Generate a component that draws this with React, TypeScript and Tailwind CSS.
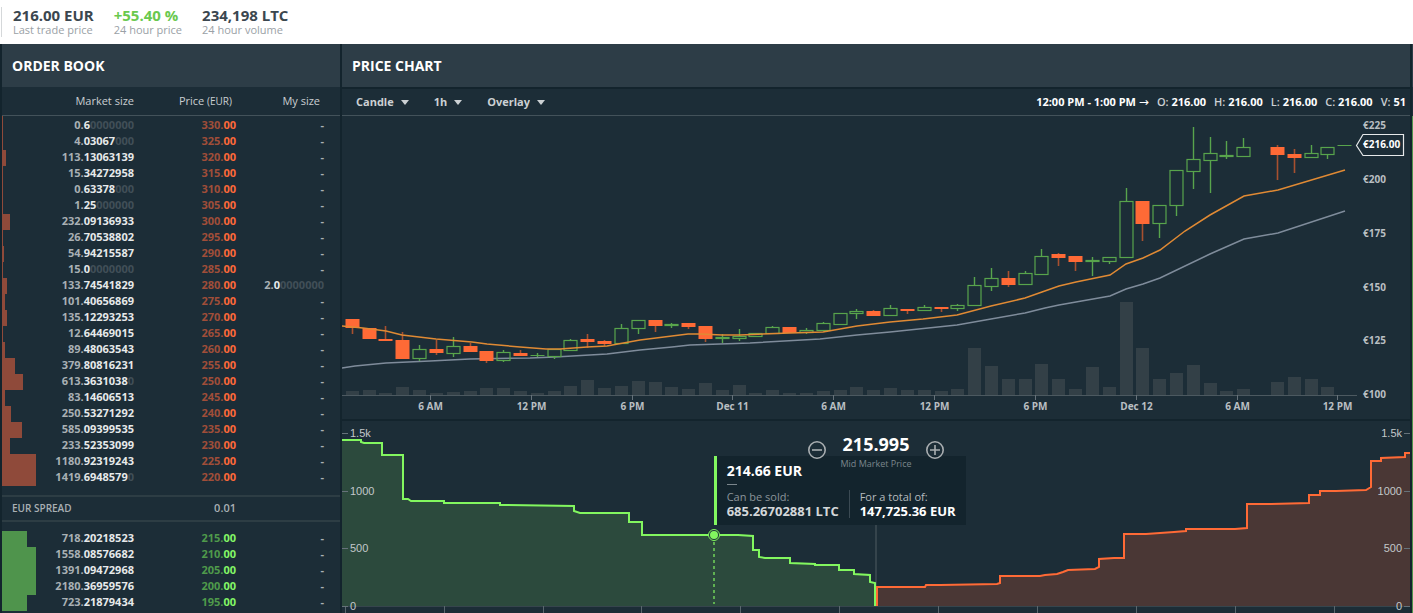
import { useState } from "react";

type Level = { size: string; price: number; mine?: string; bar: number };

type Candle = {
    up: boolean;
    top: number;
    bottom: number;
    high: number;
    low: number;
};

const asks: Level[] = [
    { size: "0.60000000", price: 330, bar: 1 },
    { size: "4.03067000", price: 325, bar: 1 },
    { size: "113.13063139", price: 320, bar: 4 },
    { size: "15.34272958", price: 315, bar: 1 },
    { size: "0.63378000", price: 310, bar: 1 },
    { size: "1.25000000", price: 305, bar: 1 },
    { size: "232.09136933", price: 300, bar: 8 },
    { size: "26.70538802", price: 295, bar: 1 },
    { size: "54.94215587", price: 290, bar: 2 },
    { size: "15.00000000", price: 285, bar: 1 },
    { size: "133.74541829", price: 280, mine: "2.00000000", bar: 5 },
    { size: "101.40656869", price: 275, bar: 3 },
    { size: "135.12293253", price: 270, bar: 5 },
    { size: "12.64469015", price: 265, bar: 1 },
    { size: "89.48063543", price: 260, bar: 3 },
    { size: "379.80816231", price: 255, bar: 13 },
    { size: "613.36310380", price: 250, bar: 21 },
    { size: "83.14606513", price: 245, bar: 3 },
    { size: "250.53271292", price: 240, bar: 9 },
    { size: "585.09399535", price: 235, bar: 20 },
    { size: "233.52353099", price: 230, bar: 8 },
    { size: "1180.92319243", price: 225, bar: 34 },
    { size: "1419.69485790", price: 220, bar: 34 },
];

const bids: Level[] = [
    { size: "718.20218523", price: 215, bar: 25 },
    { size: "1558.08576682", price: 210, bar: 34 },
    { size: "1391.09472968", price: 205, bar: 34 },
    { size: "2180.36959576", price: 200, bar: 34 },
    { size: "723.21879434", price: 195, bar: 25 },
];

const c = (
    up: boolean,
    top: number,
    bottom: number,
    high = top,
    low = bottom
): Candle => ({ up, top, bottom, high, low });

// null is an hour without trades
const candles: (Candle | null)[] = [
    c(false, 319, 328, 319, 334),
    c(false, 328, 339),
    c(false, 339, 341, 326),
    c(false, 340, 359, 332),
    c(true, 349, 359, 345, 361),
    c(false, 349, 353, 340, 355),
    c(true, 346, 354, 337, 357),
    c(false, 346, 352, 343),
    c(false, 351, 361, 351, 363),
    c(true, 352, 361, 350, 362),
    c(false, 353, 356, 350),
    c(true, 355, 356, 353, 357),
    c(true, 349, 357, 349, 359),
    c(true, 340, 351, 339),
    c(false, 339, 342, 334, 348),
    c(false, 341, 344, 340, 346),
    c(true, 328, 344, 324),
    c(true, 320, 329, 320, 334),
    c(false, 320, 326, 320, 332),
    c(true, 324, 326, 323, 328),
    c(false, 323, 327, 323, 329),
    c(false, 326, 339, 326, 342),
    c(true, 337, 339, 334, 343),
    c(true, 336, 339, 329, 341),
    c(true, 333, 337),
    c(true, 327, 334, 326),
    c(false, 327, 333),
    c(true, 330, 333, 328, 334),
    c(true, 323, 331, 322),
    c(true, 313, 325),
    c(true, 311, 314, 309, 319),
    c(false, 311, 316, 310),
    c(true, 308, 316, 305),
    c(false, 309, 311, 309, 314),
    c(true, 307, 311, 305),
    c(false, 307, 309, 307, 312),
    c(true, 305, 309, 304, 311),
    c(true, 285, 306, 277),
    c(true, 278, 287, 268, 291),
    c(false, 278, 285, 271, 287),
    c(true, 273, 285, 271),
    c(true, 256, 275, 249),
    c(false, 254, 258, 253, 266),
    c(false, 256, 262, 256, 271),
    c(true, 260, 262, 257, 276),
    c(true, 257, 262, 257, 264),
    c(true, 201, 258, 188),
    c(false, 201, 224, 201, 241),
    c(true, 205, 224, 205, 238),
    c(true, 170, 206, 170, 216),
    c(true, 159, 172, 127, 189),
    c(true, 153, 161, 137, 193),
    c(true, 155, 157, 141, 159),
    c(true, 147, 157, 138),
    null,
    c(false, 147, 155, 145, 180),
    c(false, 154, 158, 149, 173),
    c(true, 153, 158, 145),
    c(true, 147, 155, 147, 159),
    c(true, 145, 146),
];

const volumes = [
    4, 5, 2, 8, 5, 2, 3, 4, 7, 7, 4, 2, 4, 9, 15, 7, 9, 14, 13, 8, 6, 12, 5, 10,
    2, 5, 2, 2, 4, 5, 8, 5, 7, 5, 5, 4, 6, 47, 29, 16, 16, 31, 16, 6, 28, 8, 93,
    47, 16, 22, 30, 12, 4, 6, 0, 13, 18, 16, 8, 0,
];

const fastAverage =
    "342,326 363,328 386,331 402,335 436,339 472,342 487,344 520,347 546,349 560,349 587,347 607,346 640,340 672,336 688,334 700,334 722,335 740,335 790,333 823,332 857,326 890,322 923,319 957,315 991,306 1025,298 1042,292 1059,286 1076,282 1110,275 1126,264 1143,258 1160,250 1185,231 1210,215 1244,196 1278,190 1345,170";
const slowAverage =
    "342,368 355,366 386,363 430,361 470,359 530,358 555,357 607,354 640,350 672,347 690,345 720,344 750,343 820,339 857,335 890,332 957,325 991,319 1025,313 1045,308 1059,305 1076,302 1110,296 1126,289 1143,284 1160,278 1210,254 1244,239 1278,233 1345,211";

const bidDepth =
    "342,440 361,440 361,442 364,443 382,443 382,455 403,455 403,499 408,499 411,501 444,501 444,503 500,503 500,505 505,505 574,506 574,511 580,513 629,513 629,522 642,522 642,535 738,535 753,536 753,550 759,550 759,557 765,558 790,558 790,563 815,564 815,565 839,565 839,570 854,570 854,574 870,575 870,582 875,583 875,606";
const askDepth =
    "877,606 877,587 925,587 926,585 940,585 997,584 1000,583 1000,576 1040,576 1045,575 1057,574 1063,572 1068,570 1095,569 1099,567 1099,559 1114,558 1124,558 1124,534 1146,534 1174,532 1186,531 1186,529 1235,529 1247,528 1247,504 1271,504 1309,503 1309,495 1320,495 1320,491 1336,491 1366,490 1371,487 1371,461 1381,461 1381,458 1405,457 1405,453 1411,453";

const timeTicks = [
    { x: 430, label: "6 AM" },
    { x: 531, label: "12 PM" },
    { x: 632, label: "6 PM" },
    { x: 732, label: "Dec 11" },
    { x: 833, label: "6 AM" },
    { x: 934, label: "12 PM" },
    { x: 1035, label: "6 PM" },
    { x: 1136, label: "Dec 12" },
    { x: 1237, label: "6 AM" },
    { x: 1337, label: "12 PM" },
];

const priceTicks = [
    { y: 125, label: "€225" },
    { y: 179, label: "€200" },
    { y: 233, label: "€175" },
    { y: 287, label: "€150" },
    { y: 340, label: "€125" },
    { y: 394, label: "€100" },
];

const depthTicks = [
    { y: 433, label: "1.5k" },
    { y: 491, label: "1000" },
    { y: 548, label: "500" },
    { y: 606, label: "0" },
];

const depthPriceTicks = [
    345, 444, 543, 641, 740, 839, 938, 1037, 1136, 1235, 1334,
];

// Whole part is dimmed, trailing zeros are almost hidden
function Size({ value }: { value: string }) {
    const [whole, decimals] = value.split(".");
    const digits = decimals.replace(/0+$/, "") || "0";
    return (
        <>
            <span className="text-[#a9b0b4]">{whole}.</span>
            <span className="text-[#e6e9ea]">{digits}</span>
            <span className="text-[#414f57]">
                {decimals.slice(digits.length)}
            </span>
        </>
    );
}

function LevelRow({ level, side }: { level: Level; side: "ask" | "bid" }) {
    const isAsk = side === "ask";
    return (
        <tr className="h-4 text-right text-[11px] leading-4 font-bold">
            <td className="p-0">
                <div
                    className={
                        isAsk ? "h-4 bg-[#8f4a3a]" : "h-4 bg-[#4f944c]"
                    }
                    style={{ width: level.bar }}
                ></div>
            </td>
            <td className="p-0">
                <div className="-mt-[2px]">
                    <Size value={level.size} />
                </div>
            </td>
            <td className="p-0">
                <div className="-mt-[2px]">
                    <span
                        className={isAsk ? "text-[#a04e39]" : "text-[#4f9a4b]"}
                    >
                        {level.price}.
                    </span>
                    <span
                        className={isAsk ? "text-[#ff6939]" : "text-[#84f766]"}
                    >
                        00
                    </span>
                </div>
            </td>
            <td className="p-0 text-[#a9b0b4]">
                <div className="-mt-[2px]">
                    {level.mine ? <Size value={level.mine} /> : "-"}
                </div>
            </td>
            <td></td>
        </tr>
    );
}

function OrderBook() {
    return (
        <section className="w-[338px] shrink-0 bg-[#1c2d37]">
            <h2 className="flex h-[43px] items-center bg-[#2d3d47] px-[10px] text-[14px] font-bold text-white">
                ORDER BOOK
            </h2>
            <table className="w-full table-fixed border-collapse">
                <colgroup>
                    <col className="w-[34px]" />
                    <col className="w-[98px]" />
                    <col className="w-[102px]" />
                    <col className="w-[88px]" />
                    <col />
                </colgroup>
                <thead>
                    <tr className="h-[28px] border-b border-[#43525a] text-right text-[11px] text-[#c9ced1]">
                        <th className="p-0 font-normal" colSpan={2}>
                            Market size
                        </th>
                        <th className="p-0 pr-1 font-normal">
                            Price <span className="text-[10px]">(EUR)</span>
                        </th>
                        <th className="p-0 pr-1 font-normal">My size</th>
                        <th></th>
                    </tr>
                </thead>
                <tbody>
                    <tr className="h-[2px]">
                        <td className="p-0" colSpan={5}>
                            <div className="h-[2px] w-px bg-[#8f4a3a]"></div>
                        </td>
                    </tr>
                    {asks.map((level) => (
                        <LevelRow key={level.price} level={level} side="ask" />
                    ))}
                </tbody>
                <tbody>
                    <tr className="h-[10px]">
                        <td colSpan={5}></td>
                    </tr>
                    <tr className="h-[25px] border-y-2 border-[#2d3d44] text-[11px] text-[#a9b0b4]">
                        <th
                            className="p-0 pl-[10px] text-left text-[10px] font-semibold"
                            colSpan={2}
                        >
                            EUR SPREAD
                        </th>
                        <td className="p-0 text-right font-semibold">0.01</td>
                        <td colSpan={2}></td>
                    </tr>
                    <tr className="h-[10px]">
                        <td colSpan={5}></td>
                    </tr>
                </tbody>
                <tbody>
                    {bids.map((level) => (
                        <LevelRow key={level.price} level={level} side="bid" />
                    ))}
                </tbody>
            </table>
        </section>
    );
}

function Dropdown({ label, options }: { label: string; options: string[] }) {
    const [value, setValue] = useState(options[0]);
    return (
        <div className="relative flex items-center">
            <select
                aria-label={label}
                value={value}
                onChange={(e) => setValue(e.target.value)}
                className="field-sizing-content appearance-none bg-transparent pr-[15px] text-[11px] leading-4 font-bold text-[#ccd1d4] outline-none"
            >
                {options.map((option) => (
                    <option key={option}>{option}</option>
                ))}
            </select>
            <svg
                viewBox="0 0 8 5"
                className="pointer-events-none absolute right-0 h-[5px] w-2 fill-[#ccd1d4]"
            >
                <path d="M0 0h8L4 5z" />
            </svg>
        </div>
    );
}

function Ohlc({ name, value }: { name: string; value: string }) {
    return (
        <span>
            <span className="font-semibold text-[#ccd1d4]">{name}:</span>{" "}
            {value}
        </span>
    );
}

function CandleShape({ candle, x }: { candle: Candle; x: number }) {
    const { up, top, bottom, high, low } = candle;
    if (up) {
        return (
            <g stroke="#58a44c" fill="none">
                {high < top && (
                    <path d={`M${x} ${high}V${top}`} strokeWidth="1.4" />
                )}
                {low > bottom && (
                    <path d={`M${x} ${bottom}V${low}`} strokeWidth="1.4" />
                )}
                {bottom - top < 2 ? (
                    <path d={`M${x - 7} ${top + 0.5}h14`} />
                ) : (
                    <rect
                        x={x - 6.5}
                        y={top + 0.5}
                        width="13"
                        height={bottom - top - 1}
                        strokeWidth="1.2"
                    />
                )}
            </g>
        );
    }
    return (
        <g>
            <path
                d={`M${x} ${high}V${low}`}
                stroke="#a8502f"
                strokeWidth="1.6"
            />
            <rect
                x={x - 7}
                y={top}
                width="14"
                height={bottom - top}
                fill="#ff6a36"
            />
        </g>
    );
}

function PriceChart() {
    const candleX = (i: number) => Math.round(351.8 + i * 16.82) + 0.5;
    return (
        <svg viewBox="342 116 1068 303" className="block w-full">
            {volumes.map((v, i) => (
                <rect
                    key={i}
                    x={candleX(i) - 6.5}
                    y={395 - v}
                    width="13"
                    height={v}
                    fill="#334047"
                />
            ))}
            <path d="M342 395.5H1357" stroke="#4c5960" />
            {timeTicks.map((tick) => (
                <g key={tick.x}>
                    <path d={`M${tick.x + 0.5} 395v5`} stroke="#66727a" />
                    <text
                        x={tick.x + 0.5}
                        y="410"
                        textAnchor="middle"
                        className="fill-[#b9bfc2] text-[10px] font-bold"
                    >
                        {tick.label}
                    </text>
                </g>
            ))}
            {priceTicks.map((tick) => (
                <text
                    key={tick.y}
                    x="1363"
                    y={tick.y + 4}
                    className="fill-[#b9bfc2] text-[10px] font-bold"
                >
                    {tick.label}
                </text>
            ))}
            <polyline
                points={slowAverage}
                fill="none"
                stroke="#7f8c9b"
                strokeWidth="1.5"
            />
            {candles.map(
                (candle, i) =>
                    candle && (
                        <CandleShape key={i} candle={candle} x={candleX(i)} />
                    )
            )}
            <polyline
                points={fastAverage}
                fill="none"
                stroke="#e08a34"
                strokeWidth="1.5"
            />
            <path
                d="M1356.5 145.5L1363 134.5H1403.5V155.5H1363Z"
                fill="#1c2d37"
                stroke="#e6e9ea"
                strokeWidth="1.2"
            />
            <text
                x="1363"
                y="148"
                className="fill-white text-[10px] font-bold"
            >
                €216.00
            </text>
        </svg>
    );
}

function DepthChart() {
    return (
        <svg viewBox="342 421 1068 192" className="block w-full">
            <path d="M876 470V606" stroke="#35444c" strokeWidth="2" />
            <polygon points={`342,606 ${bidDepth}`} fill="#2c4a3d" />
            <polygon points={`${askDepth} 1411,606`} fill="#4a3735" />
            <path d="M342 606.5H1410" stroke="#36454d" />
            {depthPriceTicks.map((x) => (
                <path key={x} d={`M${x + 0.5} 606v7`} stroke="#5a676e" />
            ))}
            <polyline
                points={bidDepth}
                fill="none"
                stroke="#82f75f"
                strokeWidth="2"
            />
            <polyline
                points={askDepth}
                fill="none"
                stroke="#ff6a36"
                strokeWidth="2"
            />
            {depthTicks.map((tick) => (
                <g
                    key={tick.y}
                    className="fill-[#c3c8ca] font-['Liberation_Sans',Arial,sans-serif] text-[11px]"
                >
                    <path
                        d={`M342 ${tick.y + 0.5}h6M1404 ${tick.y + 0.5}h6`}
                        stroke="#66727a"
                    />
                    <text x="350" y={tick.y + 4}>
                        {tick.label}
                    </text>
                    <text x="1402" y={tick.y + 4} textAnchor="end">
                        {tick.label}
                    </text>
                </g>
            ))}
            <path
                d="M714 542V604"
                stroke="#5fb152"
                strokeWidth="2"
                strokeDasharray="3 3"
            />
            <circle cx="714" cy="535" r="5.5" fill="#1c2d37" stroke="#82f75f" />
            <circle cx="714" cy="535" r="4" fill="#82f75f" />
        </svg>
    );
}

function ZoomButton({ label, path }: { label: string; path: string }) {
    return (
        <button type="button" aria-label={label} className="mt-[11px]">
            <svg
                viewBox="0 0 18 18"
                className="block size-[18px] fill-none stroke-[#a9aeb1]"
                strokeWidth="1.6"
            >
                <circle cx="9" cy="9" r="8.2" />
                <path d={path} />
            </svg>
        </button>
    );
}

function DepthTooltip() {
    return (
        <div className="absolute top-[35px] left-[34.8%] flex h-[69px] flex-col border-l-3 border-[#82f75f] bg-[#13242d] px-[10px] pt-[7px] text-[13px] leading-[14px] font-bold whitespace-nowrap text-white">
            <p className="text-[14px] leading-4">214.66 EUR</p>
            <div className="mt-[5px] h-px w-[10px] shrink-0 bg-[#7b868c]"></div>
            <div className="mt-[5px] flex">
                <div className="border-r border-[#3b4a53] pr-[10px] text-[#d3d7d9]">
                    <p className="text-[11px] font-normal text-[#8b959a]">
                        Can be sold:
                    </p>
                    <p>685.26702881 LTC</p>
                </div>
                <div className="pl-[10px]">
                    <p className="text-[11px] font-normal text-[#b5bbbe]">
                        For a total of:
                    </p>
                    <p>147,725.36 EUR</p>
                </div>
            </div>
        </div>
    );
}

function Charts() {
    return (
        <section className="flex min-w-0 flex-1 flex-col gap-[2px]">
            <h2 className="flex h-[43px] items-center bg-[#2d3d47] px-[10px] text-[14px] font-bold text-white">
                PRICE CHART
            </h2>
            <div className="bg-[#1c2d37]">
                <div className="flex h-[27px] items-center justify-between border-b border-[#43525a] pr-1 pl-[14px]">
                    <div className="flex gap-[25px]">
                        <Dropdown
                            label="Chart type"
                            options={["Candle", "Line"]}
                        />
                        <Dropdown
                            label="Interval"
                            options={["1h", "1m", "5m", "15m", "6h", "1d"]}
                        />
                        <Dropdown
                            label="Overlay"
                            options={["Overlay", "EMA12", "EMA26"]}
                        />
                    </div>
                    <div className="flex gap-2 text-[11px] leading-4 font-bold whitespace-nowrap text-white">
                        <span>
                            12:00 PM - 1:00 PM{" "}
                            <span className="font-['DejaVu_Sans',sans-serif] text-[12px] font-normal">
                                →
                            </span>
                        </span>
                        <Ohlc name="O" value="216.00" />
                        <Ohlc name="H" value="216.00" />
                        <Ohlc name="L" value="216.00" />
                        <Ohlc name="C" value="216.00" />
                        <Ohlc name="V" value="51" />
                    </div>
                </div>
                <PriceChart />
            </div>
            <div className="relative flex-1 bg-[#1c2d37]">
                <DepthChart />
                <DepthTooltip />
                <div className="absolute inset-x-0 top-[9px] flex justify-center">
                    <div className="flex w-[136px] items-start justify-between">
                        <ZoomButton label="Zoom out" path="M4 9h10" />
                        <div className="flex flex-col items-center">
                            <span className="text-[18px] leading-7 font-bold text-white">
                                215.995
                            </span>
                            <span className="text-[9px] leading-3 whitespace-nowrap text-[#7b868c]">
                                Mid Market Price
                            </span>
                        </div>
                        <ZoomButton label="Zoom in" path="M4 9h10M9 4v10" />
                    </div>
                </div>
            </div>
        </section>
    );
}

function Stat({
    value,
    label,
    positive,
}: {
    value: string;
    label: string;
    positive?: boolean;
}) {
    return (
        <div>
            <p
                className={
                    positive
                        ? "text-[15px] leading-4 font-bold text-[#69c94e]"
                        : "text-[15px] leading-4 font-bold text-[#3b474f]"
                }
            >
                {value}
            </p>
            <p className="text-[11px] leading-[14px] text-[#9aa1a6]">{label}</p>
        </div>
    );
}

export default function App() {
    return (
        <div className="flex h-screen flex-col overflow-hidden bg-[#13242d] font-['Open_Sans','Noto_Sans',sans-serif]">
            <header className="flex h-11 shrink-0 bg-white py-[7px] pl-px">
                <div className="flex gap-5 border-l border-[#d5d8da] pl-[11px]">
                    <Stat value="216.00 EUR" label="Last trade price" />
                    <Stat value="+55.40 %" label="24 hour price" positive />
                    <Stat value="234,198 LTC" label="24 hour volume" />
                </div>
            </header>
            <main className="flex flex-1 gap-[2px] pl-[2px]">
                <OrderBook />
                <Charts />
                <aside className="flex w-px flex-col">
                    <div className="h-[43px] bg-[#2d3d47]"></div>
                    <div className="h-[29px] bg-[#1c2d37]"></div>
                    <div className="flex-1 bg-[#4f944c]"></div>
                </aside>
            </main>
        </div>
    );
}
